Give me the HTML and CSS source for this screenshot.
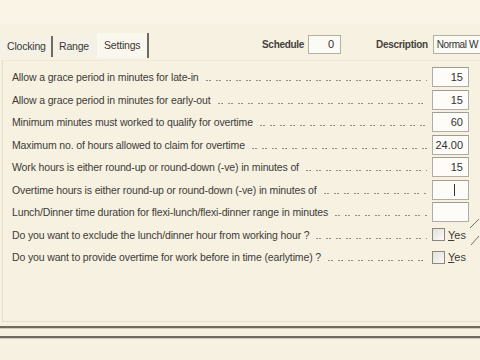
FILE: index.html
```html
<!DOCTYPE html>
<html>
<head>
<meta charset="utf-8">
<link rel="stylesheet" href="styles.css">
</head>
<body>
<div class="top"></div>
<div class="header">
  <div class="tabs">
    <div class="tab tab-clocking">Clocking</div>
    <div class="tab tab-range">Range</div>
    <div class="tab tab-active">Settings</div>
  </div>
  <div class="meta">
    <span class="meta-label">Schedule</span>
    <div class="meta-box sched">0</div>
    <span class="meta-label desc-label">Description</span>
    <div class="meta-box desc">Normal W</div>
  </div>
</div>
<div class="panel">
  <div class="row"><span class="label">Allow a grace period in minutes for late-in</span><span class="leader"></span><div class="field">15</div></div>
  <div class="row"><span class="label">Allow a grace period in minutes for early-out</span><span class="leader"></span><div class="field">15</div></div>
  <div class="row"><span class="label">Minimum minutes must worked to qualify for overtime</span><span class="leader"></span><div class="field">60</div></div>
  <div class="row"><span class="label">Maximum no. of hours allowed to claim for overtime</span><span class="leader"></span><div class="field">24.00</div></div>
  <div class="row"><span class="label">Work hours is either round-up or round-down (-ve) in minutes of</span><span class="leader"></span><div class="field">15</div></div>
  <div class="row"><span class="label">Overtime hours is either round-up or round-down (-ve) in minutes of</span><span class="leader"></span><div class="field"><span class="caret"></span></div></div>
  <div class="row"><span class="label">Lunch/Dinner time duration for flexi-lunch/flexi-dinner range in minutes</span><span class="leader"></span><div class="field"></div></div>
  <div class="row"><span class="label">Do you want to exclude the lunch/dinner hour from working hour ?</span><span class="leader"></span><div class="check"><span class="box"></span><span class="yes"><u>Y</u>es</span></div></div>
  <div class="row"><span class="label">Do you want to provide overtime for work before in time (earlytime) ?</span><span class="leader"></span><div class="check"><span class="box"></span><span class="yes"><u>Y</u>es</span></div></div>
</div>
<div class="rule"></div>
<div class="rule rule2"></div>
<svg class="edge" width="12" height="50" viewBox="0 0 12 50">
  <line x1="2" y1="20" x2="11" y2="11" stroke="#77736a" stroke-width="1"/>
  <line x1="3" y1="37" x2="11" y2="28" stroke="#77736a" stroke-width="1"/>
</svg>
</body>
</html>
```
FILE: styles.css
```css
html, body {
  margin: 0;
  padding: 0;
}
body {
  width: 480px;
  height: 360px;
  overflow: hidden;
  background: #f7f1e1;
  font-family: "Liberation Sans", Arial, sans-serif;
  font-size: 11px;
  color: #3c3b38;
  position: relative;
}
.top {
  height: 24px;
  background: #f9f4e6;
}
.header {
  height: 36px;
  display: flex;
  align-items: flex-start;
}
.tabs {
  display: flex;
  align-items: flex-end;
  height: 25px;
  margin-top: 9px;
  width: 149px;
  flex: none;
}
.tab {
  box-sizing: border-box;
  font-size: 10.5px;
  letter-spacing: -0.2px;
  color: #3a3935;
  background: #f5f1e6;
}
.tab-clocking {
  width: 53px;
  height: 21px;
  line-height: 21px;
  padding-left: 7px;
  border-right: 2px solid #6f6b63;
  margin-bottom: 1px;
}
.tab-range {
  width: 44px;
  height: 22px;
  line-height: 22px;
  padding-left: 6px;
  margin-bottom: 1px;
}
.tab-active {
  width: 52px;
  height: 25px;
  line-height: 24px;
  padding-left: 7px;
  border-right: 2px solid #6f6b63;
  background: #faf7ee;
}
.meta {
  display: flex;
  align-items: center;
  margin-top: 11px;
  margin-left: 113px;
  white-space: nowrap;
}
.meta-label {
  font-weight: bold;
  color: #44423d;
  font-size: 10px;
  letter-spacing: -0.3px;
}
.meta-box {
  box-sizing: border-box;
  height: 19px;
  background: #fbfaf5;
  border: 1px solid #b3b0a6;
  line-height: 17px;
  font-size: 11px;
  color: #333;
}
.sched {
  width: 33px;
  margin-left: 4px;
  text-align: right;
  padding-right: 6px;
}
.desc-label {
  margin-left: 35px;
}
.desc {
  width: 47px;
  margin-left: 5px;
  padding-left: 3px;
  border-right: none;
  overflow: hidden;
  font-size: 10px;
  letter-spacing: -0.4px;
}
.panel {
  height: 262px;
  box-sizing: border-box;
  margin-left: 2px;
  border-left: 1px solid #e4ddca;
  border-top: 1px solid #efe9d8;
  border-bottom: 1px solid #e6dfcc;
  padding: 5px 0 0 9px;
}
.row {
  height: 22.5px;
  display: flex;
  align-items: center;
  white-space: nowrap;
}
.label {
  flex: none;
  color: #3c3b38;
  font-size: 10.5px;
  letter-spacing: -0.14px;
}
.leader {
  flex: 1;
  overflow: hidden;
  height: 14px;
  margin: 0 5px 0 3px;
  background-image: radial-gradient(circle, #938f85 0.7px, transparent 0.9px), radial-gradient(circle, #938f85 0.7px, transparent 0.9px);
  background-size: 10px 3px, 10px 3px;
  background-position: 0 9px, 3px 9px;
  background-repeat: repeat-x;
}
.field {
  box-sizing: border-box;
  width: 37px;
  height: 20px;
  flex: none;
  margin-right: 11px;
  background: #fdfcf8;
  border: 1px solid #b1ada3;
  border-top-color: #9f9c93;
  text-align: right;
  padding-right: 5px;
  line-height: 19px;
  font-size: 11px;
  color: #333;
  position: relative;
}
.caret {
  position: absolute;
  left: 21px;
  top: 3px;
  width: 1px;
  height: 12px;
  background: #333;
}
.check {
  width: 37px;
  margin-right: 11px;
  flex: none;
  display: flex;
  align-items: center;
}
.box {
  width: 11px;
  height: 11px;
  border: 1px solid #8a877e;
  background: linear-gradient(135deg, #e2e0d8, #fbfaf6);
  flex: none;
}
.yes {
  margin-left: 3px;
  font-size: 11px;
  color: #3c3b38;
}
.rule {
  height: 2px;
  margin-top: 4px;
  background: #6f6b63;
  border-bottom: 1px solid #cfc9b8;
}
.rule2 {
  margin-top: 7px;
}
.edge {
  position: absolute;
  right: 0;
  top: 208px;
}
```
